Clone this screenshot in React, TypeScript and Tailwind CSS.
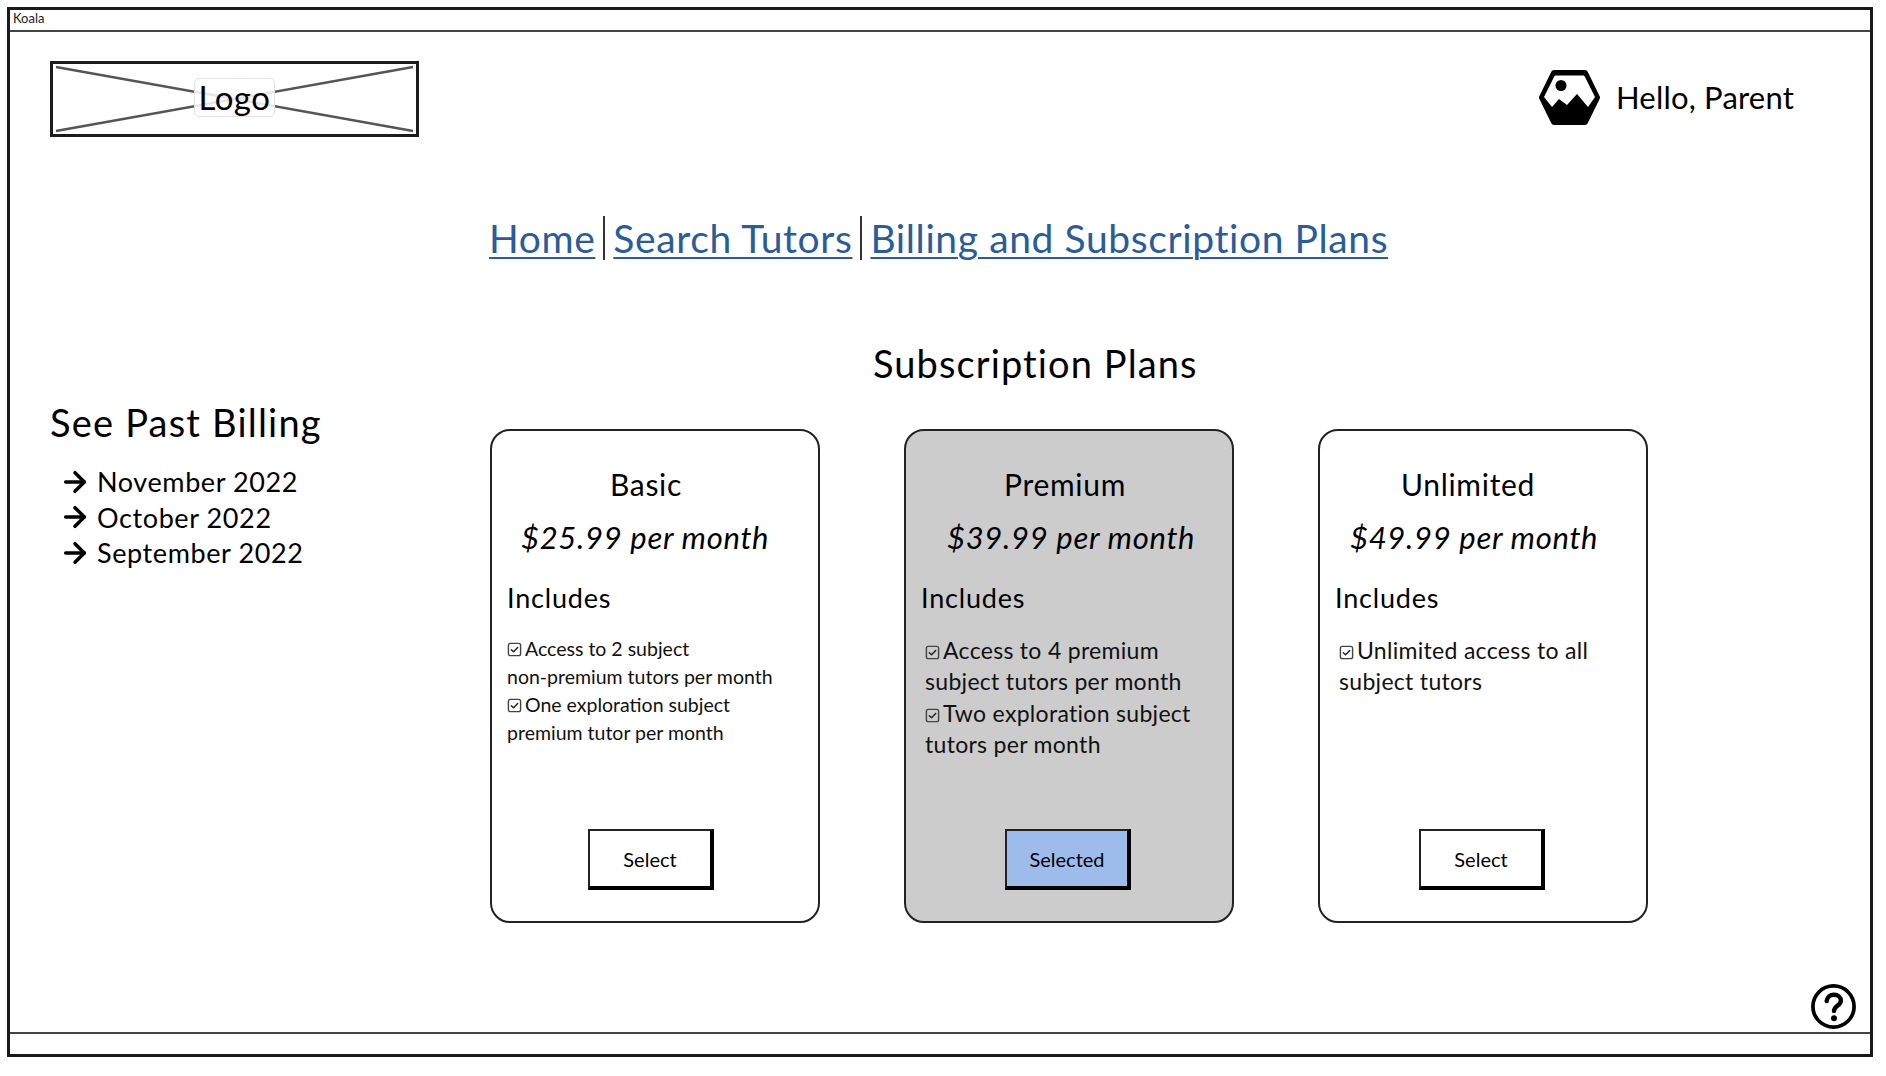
import React from "react";
import { ArrowRight } from "lucide-react";

const font = "font-['Lato','Noto_Sans',sans-serif]";

function CheckBox() {
  return (
    <svg viewBox="0 0 16 16" className="inline-block w-[15px] h-[15px] mr-[3px] align-[-1px]">
      <rect x="1.5" y="1.5" width="13" height="13" rx="2" fill="none" stroke="#444" strokeWidth="1.5" />
      <path d="M4.6 8.2l2.4 2.3 4.4-4.7" fill="none" stroke="#222" strokeWidth="1.5" strokeLinecap="round" strokeLinejoin="round" />
    </svg>
  );
}

function HexAvatar() {
  return (
    <svg viewBox="0 0 61 55" className="w-[61px] h-[55px] shrink-0">
      <path d="M15 3h31l12 24.500L46 52H15L3 27.500z" fill="#000" stroke="#000" strokeWidth="6" strokeLinejoin="round" />
      <path
        d="M17 5.500h27c1 0 1.500.5 2 1.500l10 20-7 10-11-13-10 11-8-6-7 8-8-10 10-20c.5-1 1-1.500 2-1.500z"
        fill="#fff"
      />
      <circle cx="22" cy="15.500" r="5.500" fill="#000" />
    </svg>
  );
}

function LogoBox() {
  return (
    <div className="relative w-[369px] h-[76px] border-[3px] border-[#1c1c1c] bg-white">
      <svg viewBox="0 0 363 70" preserveAspectRatio="none" className="w-full h-full">
        <path d="M3 3l357 64M360 3L3 67" stroke="#555" strokeWidth="2.500" fill="none" />
      </svg>
      <div className="absolute left-[141px] top-[14px] w-[81px] h-[39px] rounded-[5px] border border-[#e2e2e2] bg-white/85 flex items-center justify-center text-[33px] tracking-[0.5px] leading-none text-black">
        Logo
      </div>
    </div>
  );
}

function PlanCard({
  cardClass,
  nameClass,
  priceClass,
  includesClass,
  listClass,
  buttonRowClass,
  name,
  price,
  items,
  button,
  buttonClass,
}: {
  cardClass: string;
  nameClass: string;
  priceClass: string;
  includesClass: string;
  listClass: string;
  buttonRowClass: string;
  name: string;
  price: string;
  items: string[][];
  button: string;
  buttonClass: string;
}) {
  return (
    <div className={`w-[330px] h-[494px] rounded-[20px] border-2 border-[#222] flex flex-col ${cardClass}`}>
      <div className={`mt-[33px] text-[30px] tracking-[0.7px] leading-[40px] text-black ${nameClass}`}>{name}</div>
      <div className={`mt-[12.500px] text-[31px] tracking-[0.7px] leading-[40px] italic text-black ${priceClass}`}>{price}</div>
      <div className={`mt-[21px] text-[27px] tracking-[0.8px] leading-[40px] text-black ${includesClass}`}>Includes</div>
      <div className={listClass}>
        {items.map((lines, i) => (
          <div key={i}>
            <div>
              <CheckBox />
              {lines[0]}
            </div>
            {lines[1] && <div>{lines[1]}</div>}
          </div>
        ))}
      </div>
      <div className={`mt-auto mb-[31px] flex ${buttonRowClass}`}>
        <div
          className={`w-[126px] h-[61px] border-2 border-[#222] border-r-[4px] border-b-[4px] border-r-black border-b-black flex items-center justify-center text-[20px] text-black ${buttonClass}`}
        >
          {button}
        </div>
      </div>
    </div>
  );
}

export default function App() {
  return (
    <div className={`w-[1886px] h-[1076px] bg-white pt-[7px] pl-[7px] overflow-hidden ${font}`}>
      <div className="w-[1866px] h-[1050px] border-[3px] border-[#1a1a1a] flex flex-col">
        <div className="h-[22px] shrink-0 border-b-2 border-[#444] pl-[3px] text-[13px] leading-[17px] text-[#222]">Koala</div>

        <div className="flex-1 flex flex-col pl-[40px] pr-[45px]">
          <div className="pt-[29px] flex justify-between">
            <LogoBox />
            <div className="flex items-center gap-[16px] mr-[31px] -mt-[3px]">
              <HexAvatar />
              <span className="text-[31px] tracking-[0.2px] text-black">Hello, Parent</span>
            </div>
          </div>

          <div className="mt-[77px] ml-[439px] flex items-center h-[48px] text-[39px] tracking-[0.6px] leading-none text-[#2a5c9a]">
            <span className="underline decoration-2 underline-offset-[4px]">Home</span>
            <span className="w-[2px] h-[44px] bg-[#333] mx-[8px]" />
            <span className="underline decoration-2 underline-offset-[4px]">Search Tutors</span>
            <span className="w-[2px] h-[44px] bg-[#333] mx-[8px]" />
            <span className="underline decoration-2 underline-offset-[4px]">Billing and Subscription Plans</span>
          </div>

          <div className="flex mt-[77px]">
            <div className="w-[440px] shrink-0 pt-[59px]">
              <div className="text-[38px] tracking-[1.200px] leading-[48px] text-black">See Past Billing</div>
              <div className="mt-[18px] pl-[9px] flex flex-col text-[27px] tracking-[0.6px] leading-[35.500px] text-black">
                <div className="flex items-center gap-[6px]"><ArrowRight size={32} strokeWidth={2.6} />November 2022</div>
                <div className="flex items-center gap-[6px]"><ArrowRight size={32} strokeWidth={2.6} />October 2022</div>
                <div className="flex items-center gap-[6px]"><ArrowRight size={32} strokeWidth={2.6} />September 2022</div>
              </div>
            </div>

            <div className="flex flex-col">
              <div className="pl-[383px] text-[38px] tracking-[1.100px] leading-[48px] text-black">Subscription Plans</div>
              <div className="mt-[42px] flex gap-[84px]">
                <PlanCard
                  cardClass="bg-white"
                  nameClass="text-center pr-[18px]"
                  priceClass="pl-[29px]"
                  includesClass="pl-[15px]"
                  listClass="mt-[17px] pl-[15px] text-[19.500px] leading-[28px] text-[#111]"
                  buttonRowClass="pl-[96px]"
                  name="Basic"
                  price="$25.99 per month"
                  items={[["Access to 2 subject", "non-premium tutors per month"], ["One exploration subject", "premium tutor per month"]]}
                  button="Select"
                  buttonClass="bg-white"
                />
                <PlanCard
                  cardClass="bg-[#cccccc]"
                  nameClass="text-center pr-[8px]"
                  priceClass="pl-[41px]"
                  includesClass="pl-[15px]"
                  listClass="mt-[17px] pl-[19px] text-[23px] tracking-[0.3px] leading-[31.500px] text-[#111]"
                  buttonRowClass="pl-[99px]"
                  name="Premium"
                  price="$39.99 per month"
                  items={[["Access to 4 premium", "subject tutors per month"], ["Two exploration subject", "tutors per month"]]}
                  button="Selected"
                  buttonClass="bg-[#9dbcec]"
                />
                <PlanCard
                  cardClass="bg-white"
                  nameClass="text-center pr-[30px]"
                  priceClass="pl-[30px]"
                  includesClass="pl-[15px]"
                  listClass="mt-[17px] pl-[19px] text-[23px] tracking-[0.3px] leading-[31.500px] text-[#111]"
                  buttonRowClass="pl-[99px]"
                  name="Unlimited"
                  price="$49.99 per month"
                  items={[["Unlimited access to all", "subject tutors"]]}
                  button="Select"
                  buttonClass="bg-white"
                />
              </div>
            </div>
          </div>
        </div>

        <div className="h-[22px] shrink-0 border-t-2 border-[#444] flex justify-end">
          <svg viewBox="0 0 48 48" className="w-[47px] h-[47px] -mt-[51px] mr-[13px] shrink-0">
            <circle cx="24" cy="24" r="21" fill="none" stroke="#000" strokeWidth="3.800" />
            <path d="M17 18.500c.5-4 3.500-6.500 7.500-6.500 4.500 0 7 2.800 7 6 0 5-7 5.500-7 10.500" fill="none" stroke="#000" strokeWidth="4.500" strokeLinecap="round" />
            <circle cx="24.500" cy="36" r="3" fill="#000" />
          </svg>
        </div>
      </div>
    </div>
  );
}
